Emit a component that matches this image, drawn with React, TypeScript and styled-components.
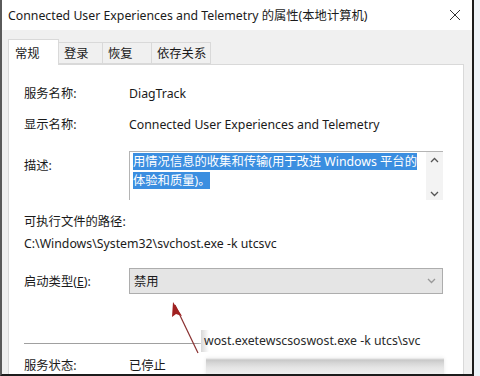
import * as React from 'react'
import styled, { createGlobalStyle } from 'styled-components'

const GlobalStyle = createGlobalStyle`
  html, body {
    margin: 0;
    padding: 0;
    width: 480px;
    height: 376px;
    overflow: hidden;
    background: #eef2f6;
  }
  body {
    font-family: "Noto Sans", "Noto Sans CJK SC", sans-serif;
    font-size: 12.3px;
    color: #1a1a1a;
  }
`

const Screen = styled.div`
  display: flex;
  width: 480px;
  height: 376px;
`

const Window = styled.div`
  flex: 0 0 474px;
  box-sizing: border-box;
  height: 376px;
  display: flex;
  flex-direction: column;
  background: #f0f0f0;
  border-left: 2px solid #5a5a5a;
  border-right: 2px solid #1c1c1c;
  border-bottom: 2px solid #1c1c1c;
  overflow: hidden;
`

const Backdrop = styled.div`
  flex: 1;
  background: #eef3f8;
`

const TitleBar = styled.div`
  flex: 0 0 30px;
  display: flex;
  align-items: center;
  justify-content: space-between;
  padding: 0 11px 0 6px;
  background: #ffffff;
`

const Title = styled.span`
  font-size: 12.3px;
  color: #1a1a1a;
`

const CloseIcon = () => (
  <svg width="12" height="12" viewBox="0 0 12 12">
    <path d="M1 1 L11 11 M11 1 L1 11" stroke="#333" strokeWidth="1" fill="none" />
  </svg>
)

const Body = styled.div`
  flex: 1;
  display: flex;
  flex-direction: column;
  padding: 9px 8px 0 6px;
`

const TabStrip = styled.div`
  display: flex;
  align-items: flex-end;
  height: 25px;
`

const Tab = styled.div<{ $active?: boolean; $width: number }>`
  box-sizing: border-box;
  width: ${(p) => p.$width}px;
  height: ${(p) => (p.$active ? '26px' : '22px')};
  margin-bottom: ${(p) => (p.$active ? '-1px' : '0')};
  padding-left: ${(p) => (p.$active ? '6px' : '5px')};
  display: flex;
  align-items: center;
  background: ${(p) => (p.$active ? '#ffffff' : '#f0f0f0')};
  border: 1px solid #d9d9d9;
  border-bottom: ${(p) => (p.$active ? 'none' : '1px solid #d9d9d9')};
  border-left: ${(p) => (p.$active ? '1px solid #d9d9d9' : 'none')};
  position: relative;
  z-index: ${(p) => (p.$active ? 1 : 0)};
`

const Panel = styled.div`
  flex: 1;
  position: relative;
  background: #ffffff;
  border: 1px solid #d9d9d9;
  border-bottom: none;
  padding: 19px 20px 0 15px;
  display: flex;
  flex-direction: column;
`

const Row = styled.div<{ $gap?: number }>`
  display: grid;
  grid-template-columns: 105px 1fr;
  align-items: center;
  line-height: 20px;
  margin-top: ${(p) => p.$gap ?? 0}px;
`

const Label = styled.span``

const Value = styled.span``

const DescRow = styled.div`
  display: grid;
  grid-template-columns: 105px 1fr;
  align-items: start;
  margin-top: 16px;
`

const DescLabel = styled.span`
  line-height: 20px;
  padding-top: 5px;
`

const TextBox = styled.div`
  position: relative;
  height: 48px;
  border-top: 1px solid #b4b4b4;
  border-left: 1px solid #b4b4b4;
  display: flex;
`

const TextContent = styled.div`
  flex: 1;
  padding: 0 6px 0 3px;
  line-height: 19px;
`

const Selected = styled.span`
  background: #3b8ee0;
  color: #ffffff;
`

const ScrollBar = styled.div`
  flex: 0 0 17px;
  display: flex;
  flex-direction: column;
  justify-content: space-between;
  align-items: center;
  padding: 5px 0 3px;
  background: #f3f3f3;
`

const Chevron = ({ up, color = '#555' }: { up?: boolean; color?: string }) => (
  <svg width="9" height="6" viewBox="0 0 9 6">
    <path
      d={up ? 'M1 5 L4.5 1.5 L8 5' : 'M1 1 L4.5 4.5 L8 1'}
      stroke={color}
      strokeWidth="1.3"
      fill="none"
    />
  </svg>
)

const Line = styled.div<{ $gap?: number }>`
  line-height: 20px;
  margin-top: ${(p) => p.$gap ?? 0}px;
`

const ComboRow = styled.div`
  display: grid;
  grid-template-columns: 105px 1fr;
  align-items: center;
  margin-top: 14px;
`

const Combo = styled.div`
  box-sizing: border-box;
  height: 26px;
  display: flex;
  align-items: center;
  justify-content: space-between;
  padding: 0 6px 0 4px;
  background: #e5e5e5;
  border: 1px solid #adadad;
`

const Mnemonic = styled.span`
  text-decoration: underline;
`

const Separator = styled.div`
  margin-top: 49px;
  height: 1px;
  background: #a0a0a0;
`

const StatusRow = styled(Row)`
  margin-top: 12px;
`

const PastedText = styled.div`
  position: absolute;
  left: 192px;
  top: 265px;
  width: 246px;
  height: 22px;
  padding-left: 3px;
  line-height: 22px;
  background: linear-gradient(to right, #d8d8d8 0, #ffffff 8px);
  color: #2a2a2a;
  white-space: nowrap;
  box-shadow: 0 0 4px #ffffff;
`

const PastedBar = styled.div`
  position: absolute;
  left: 197px;
  top: 293px;
  width: 238px;
  height: 22px;
  background: linear-gradient(
    to bottom,
    #f4f4f4 0,
    #c8c8c8 2px,
    #d6d6d6 5px,
    #e6e6e6 10px,
    #f2f2f2 18px
  );
  box-shadow: 0 0 4px #e8e8e8;
`

const Pointer = styled.svg`
  position: absolute;
  left: 147px;
  top: 232px;
`

export default function App() {
  return (
    <Screen>
      <GlobalStyle />
      <Window>
        <TitleBar>
          <Title>Connected User Experiences and Telemetry 的属性(本地计算机)</Title>
          <CloseIcon />
        </TitleBar>
        <Body>
          <TabStrip>
            <Tab $active $width={51}>常规</Tab>
            <Tab $width={44}>登录</Tab>
            <Tab $width={49}>恢复</Tab>
            <Tab $width={59}>依存关系</Tab>
          </TabStrip>
          <Panel>
            <Row>
              <Label>服务名称:</Label>
              <Value>DiagTrack</Value>
            </Row>
            <Row $gap={11}>
              <Label>显示名称:</Label>
              <Value>Connected User Experiences and Telemetry</Value>
            </Row>
            <DescRow>
              <DescLabel>描述:</DescLabel>
              <TextBox>
                <TextContent>
                  <Selected>用情况信息的收集和传输(用于改进 Windows 平台的体验和质量)。</Selected>
                </TextContent>
                <ScrollBar>
                  <Chevron up />
                  <Chevron />
                </ScrollBar>
              </TextBox>
            </DescRow>
            <Line $gap={12}>可执行文件的路径:</Line>
            <Line $gap={2}>C:\Windows\System32\svchost.exe -k utcsvc</Line>
            <ComboRow>
              <Label>
                启动类型(<Mnemonic>E</Mnemonic>):
              </Label>
              <Combo>
                <span>禁用</span>
                <Chevron color="#999" />
              </Combo>
            </ComboRow>
            <Separator />
            <StatusRow>
              <Label>服务状态:</Label>
              <Value>已停止</Value>
            </StatusRow>
            <PastedText>wost.exetewscsoswost.exe -k utcs\svc</PastedText>
            <PastedBar />
            <Pointer width="50" height="60" viewBox="0 0 50 60">
              <path d="M42 56 L19 8" stroke="#8a3030" strokeWidth="1.2" fill="none" />
              <path d="M17 5 L26 19 L20 17 L16 20 Z" fill="#a02020" />
            </Pointer>
          </Panel>
        </Body>
      </Window>
      <Backdrop />
    </Screen>
  )
}
